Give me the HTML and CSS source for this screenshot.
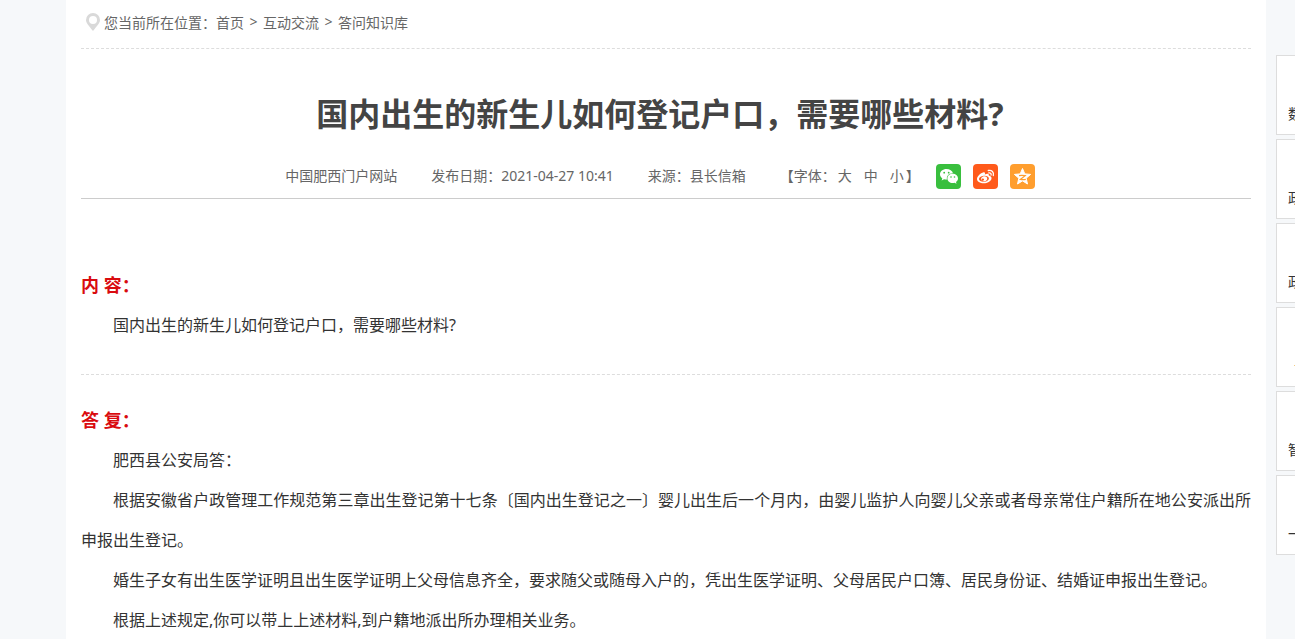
FILE: index.html
```
<!DOCTYPE html>
<html lang="zh-CN">
<head>
  <meta charset="UTF-8">
  <meta name="viewport" content="width=device-width, initial-scale=1.0">
  <title>国内出生的新生儿如何登记户口，需要哪些材料?</title>
  <link rel="stylesheet" href="styles.css">
</head>
<body>
  <main class="container">
    <nav class="position">
      <svg class="pin" viewBox="0 0 14 18" aria-hidden="true"><path fill="#d9d9d9" fill-rule="evenodd" d="M7 0a7 7 0 0 1 7 7c0 3-3 6-7 11C3 13 0 10 0 7a7 7 0 0 1 7-7zm0 3a4 4 0 1 0 0 8 4 4 0 0 0 0-8z"/></svg>
      <span>您当前所在位置：</span>
      <a href="#">首页</a><i>&gt;</i><a href="#">互动交流</a><i>&gt;</i><a href="#">答问知识库</a>
    </nav>

    <h1>国内出生的新生儿如何登记户口，需要哪些材料?</h1>

    <div class="info">
      <span>中国肥西门户网站</span>
      <span>发布日期：2021-04-27 10:41</span>
      <span>来源：县长信箱</span>
      <div class="fontsize">
        <span>【字体：</span><a href="#">大</a><a href="#">中</a><a href="#">小</a><span>】</span>
      </div>
      <div class="share">
        <a class="wechat" href="#" aria-label="微信">
          <svg viewBox="0 0 25 25">
            <path fill="#fff" d="M10.500 5C6.800 5 4 7.300 4 10.300c0 1.700.9 3.100 2.300 4.100L5.600 16.500l2.500-1.200c.8.200 1.500.3 2.400.3h.5c-.9-3.500 2.100-6.500 6-6.300C16.400 6.700 13.700 5 10.500 5z"/>
            <path fill="#fff" d="M22 14.400c0-2.600-2.500-4.600-5.300-4.600-3 0-5.300 2-5.300 4.600S13.700 19 16.700 19c.6 0 1.200-.1 1.800-.3l2 1.100-.5-1.900c1.200-.8 2-2.100 2-3.500z"/>
            <g fill="#39bf3e"><circle cx="8.200" cy="8.700" r=".9"/><circle cx="12.700" cy="8.700" r=".9"/><circle cx="15" cy="13" r=".8"/><circle cx="18.500" cy="13" r=".8"/></g>
          </svg>
        </a>
        <a class="weibo" href="#" aria-label="微博">
          <svg viewBox="0 0 25 25">
            <path fill="#fff" fill-rule="evenodd" d="M10.600 8.200c1.200-.3 1.800.5 1.200 2.200 2.500-1 4.500-.8 4 1.200 2 .5 3 1.600 2.700 3.200-.6 2.700-4 4.500-7.700 4.500-3.800 0-6.800-1.600-6.800-4.200 0-2.700 3.400-6.100 6.600-6.900zm.2 3.600c-3 .2-5 1.700-4.800 3.500.2 1.700 2.400 2.700 5.200 2.500s4.900-1.900 4.700-3.600c-.2-1.600-2.300-2.600-5.100-2.400z"/>
            <path fill="#fff" fill-rule="evenodd" d="M11 12.300c2-.1 3.500 1 3.200 2.600-.3 1.500-2 2.500-3.800 2.300-1.700-.2-2.700-1.500-2.200-2.900.4-1.100 1.500-1.900 2.800-2zm-1.200 2.200a1.200 1.100 0 1 0 .1 2.200 1.200 1.100 0 0 0-.1-2.200z"/>
            <path fill="none" stroke="#fff" stroke-width="1.300" stroke-linecap="round" d="M15.300 6.500c3.500-.8 5.900 1.800 5 5.200M15.800 8.900c1.700-.3 2.700.8 2.300 2.300"/>
          </svg>
        </a>
        <a class="qzone" href="#" aria-label="QQ空间">
          <svg viewBox="0 0 25 25">
            <path fill="#fff" stroke="#fff" stroke-linejoin="round" d="M12.500 4.500l2.300 5.400 5.800.5-4.400 3.800 1.300 5.800-5-3.100-5 3.100 1.300-5.800-4.400-3.800 5.800-.5z"/>
            <path fill="none" stroke="#ff9e2e" stroke-width="1.200" d="M9 11.700c2-.5 4-.4 6.200 0l-4.900 3.700c1.800.4 3.500.4 5.500 0"/>
          </svg>
        </a>
      </div>
    </div>

    <section class="ask">
      <h2>内 容：</h2>
      <p>国内出生的新生儿如何登记户口，需要哪些材料?</p>
    </section>

    <section class="answer">
      <h2>答 复：</h2>
      <p>肥西县公安局答：</p>
      <p>根据安徽省户政管理工作规范第三章出生登记第十七条〔国内出生登记之一〕婴儿出生后一个月内，由婴儿监护人向婴儿父亲或者母亲常住户籍所在地公安派出所申报出生登记。</p>
      <p>婚生子女有出生医学证明且出生医学证明上父母信息齐全，要求随父或随母入户的，凭出生医学证明、父母居民户口簿、居民身份证、结婚证申报出生登记。</p>
      <p>根据上述规定,你可以带上上述材料,到户籍地派出所办理相关业务。</p>
    </section>
  </main>

  <aside class="side">
    <a href="#">数</a>
    <a href="#">政</a>
    <a href="#">政</a>
    <a class="short" href="#">长</a>
    <a href="#">智</a>
    <a href="#">一</a>
  </aside>
</body>
</html>
```
FILE: styles.css
```
* { margin: 0; padding: 0; box-sizing: border-box; }
html { overflow: hidden; }
body {
  display: flex;
  gap: 10px;
  min-height: 100vh;
  padding-left: 66px;
  background: #f6f8fa;
  font-family: "Noto Sans", "Noto Sans CJK SC", sans-serif;
  font-size: 14px;
  color: #333;
  text-spacing-trim: space-all;
}
a { color: inherit; text-decoration: none; }
i { font-style: normal; }

.container { flex: 1; min-width: 0; padding: 0 15px; background: #fff; }

.position {
  display: flex;
  align-items: center;
  height: 49px;
  padding: 0 0 5px 5px;
  border-bottom: 1px dashed #ddd;
  color: #666;
}
.position i { width: 19px; text-align: center; }
.pin { width: 14px; height: 18px; margin-right: 4px; }

h1 {
  padding: 41px 12px 25px 0;
  font-size: 32px;
  line-height: 48px;
  text-align: center;
  color: #444;
}

.info {
  display: flex;
  justify-content: center;
  align-items: center;
  height: 36px;
  padding: 0 12px 9px 0;
  border-bottom: 1px solid #ccc;
  line-height: 26px;
  color: #666;
}
.info > span { margin-right: 34px; }
.fontsize { display: flex; margin-right: 16px; }
.fontsize a { margin-left: 12px; }
.fontsize a:first-of-type { margin-left: 2px; }
.fontsize a:last-of-type { margin-right: 2px; }
.share { display: flex; gap: 12px; }
.share a { width: 25px; height: 25px; border-radius: 4px; }
.share svg { display: block; width: 25px; height: 25px; }
.wechat { background: #39bf3e; }
.weibo { background: #ff5a1b; }
.qzone { background: #ff9e2e; }

.ask { padding: 66px 0 29px; border-bottom: 1px dashed #ddd; }
.answer { padding-top: 25px; }
h2 { font-size: 18px; line-height: 40px; color: #d90b0f; }
p {
  font-size: 16px;
  line-height: 40px;
  text-indent: 32px;
  text-align: justify;
}

.side {
  display: flex;
  flex-direction: column;
  gap: 4px;
  width: 19px;
  padding-top: 55px;
  overflow: hidden;
}
.side a {
  height: 80px;
  padding: 48px 0 0 11px;
  border: 1px solid #ddd;
  border-right: 0;
  background: #fff;
  line-height: 20px;
  white-space: nowrap;
  overflow: hidden;
}
.side .short { padding-left: 17px; }
```
